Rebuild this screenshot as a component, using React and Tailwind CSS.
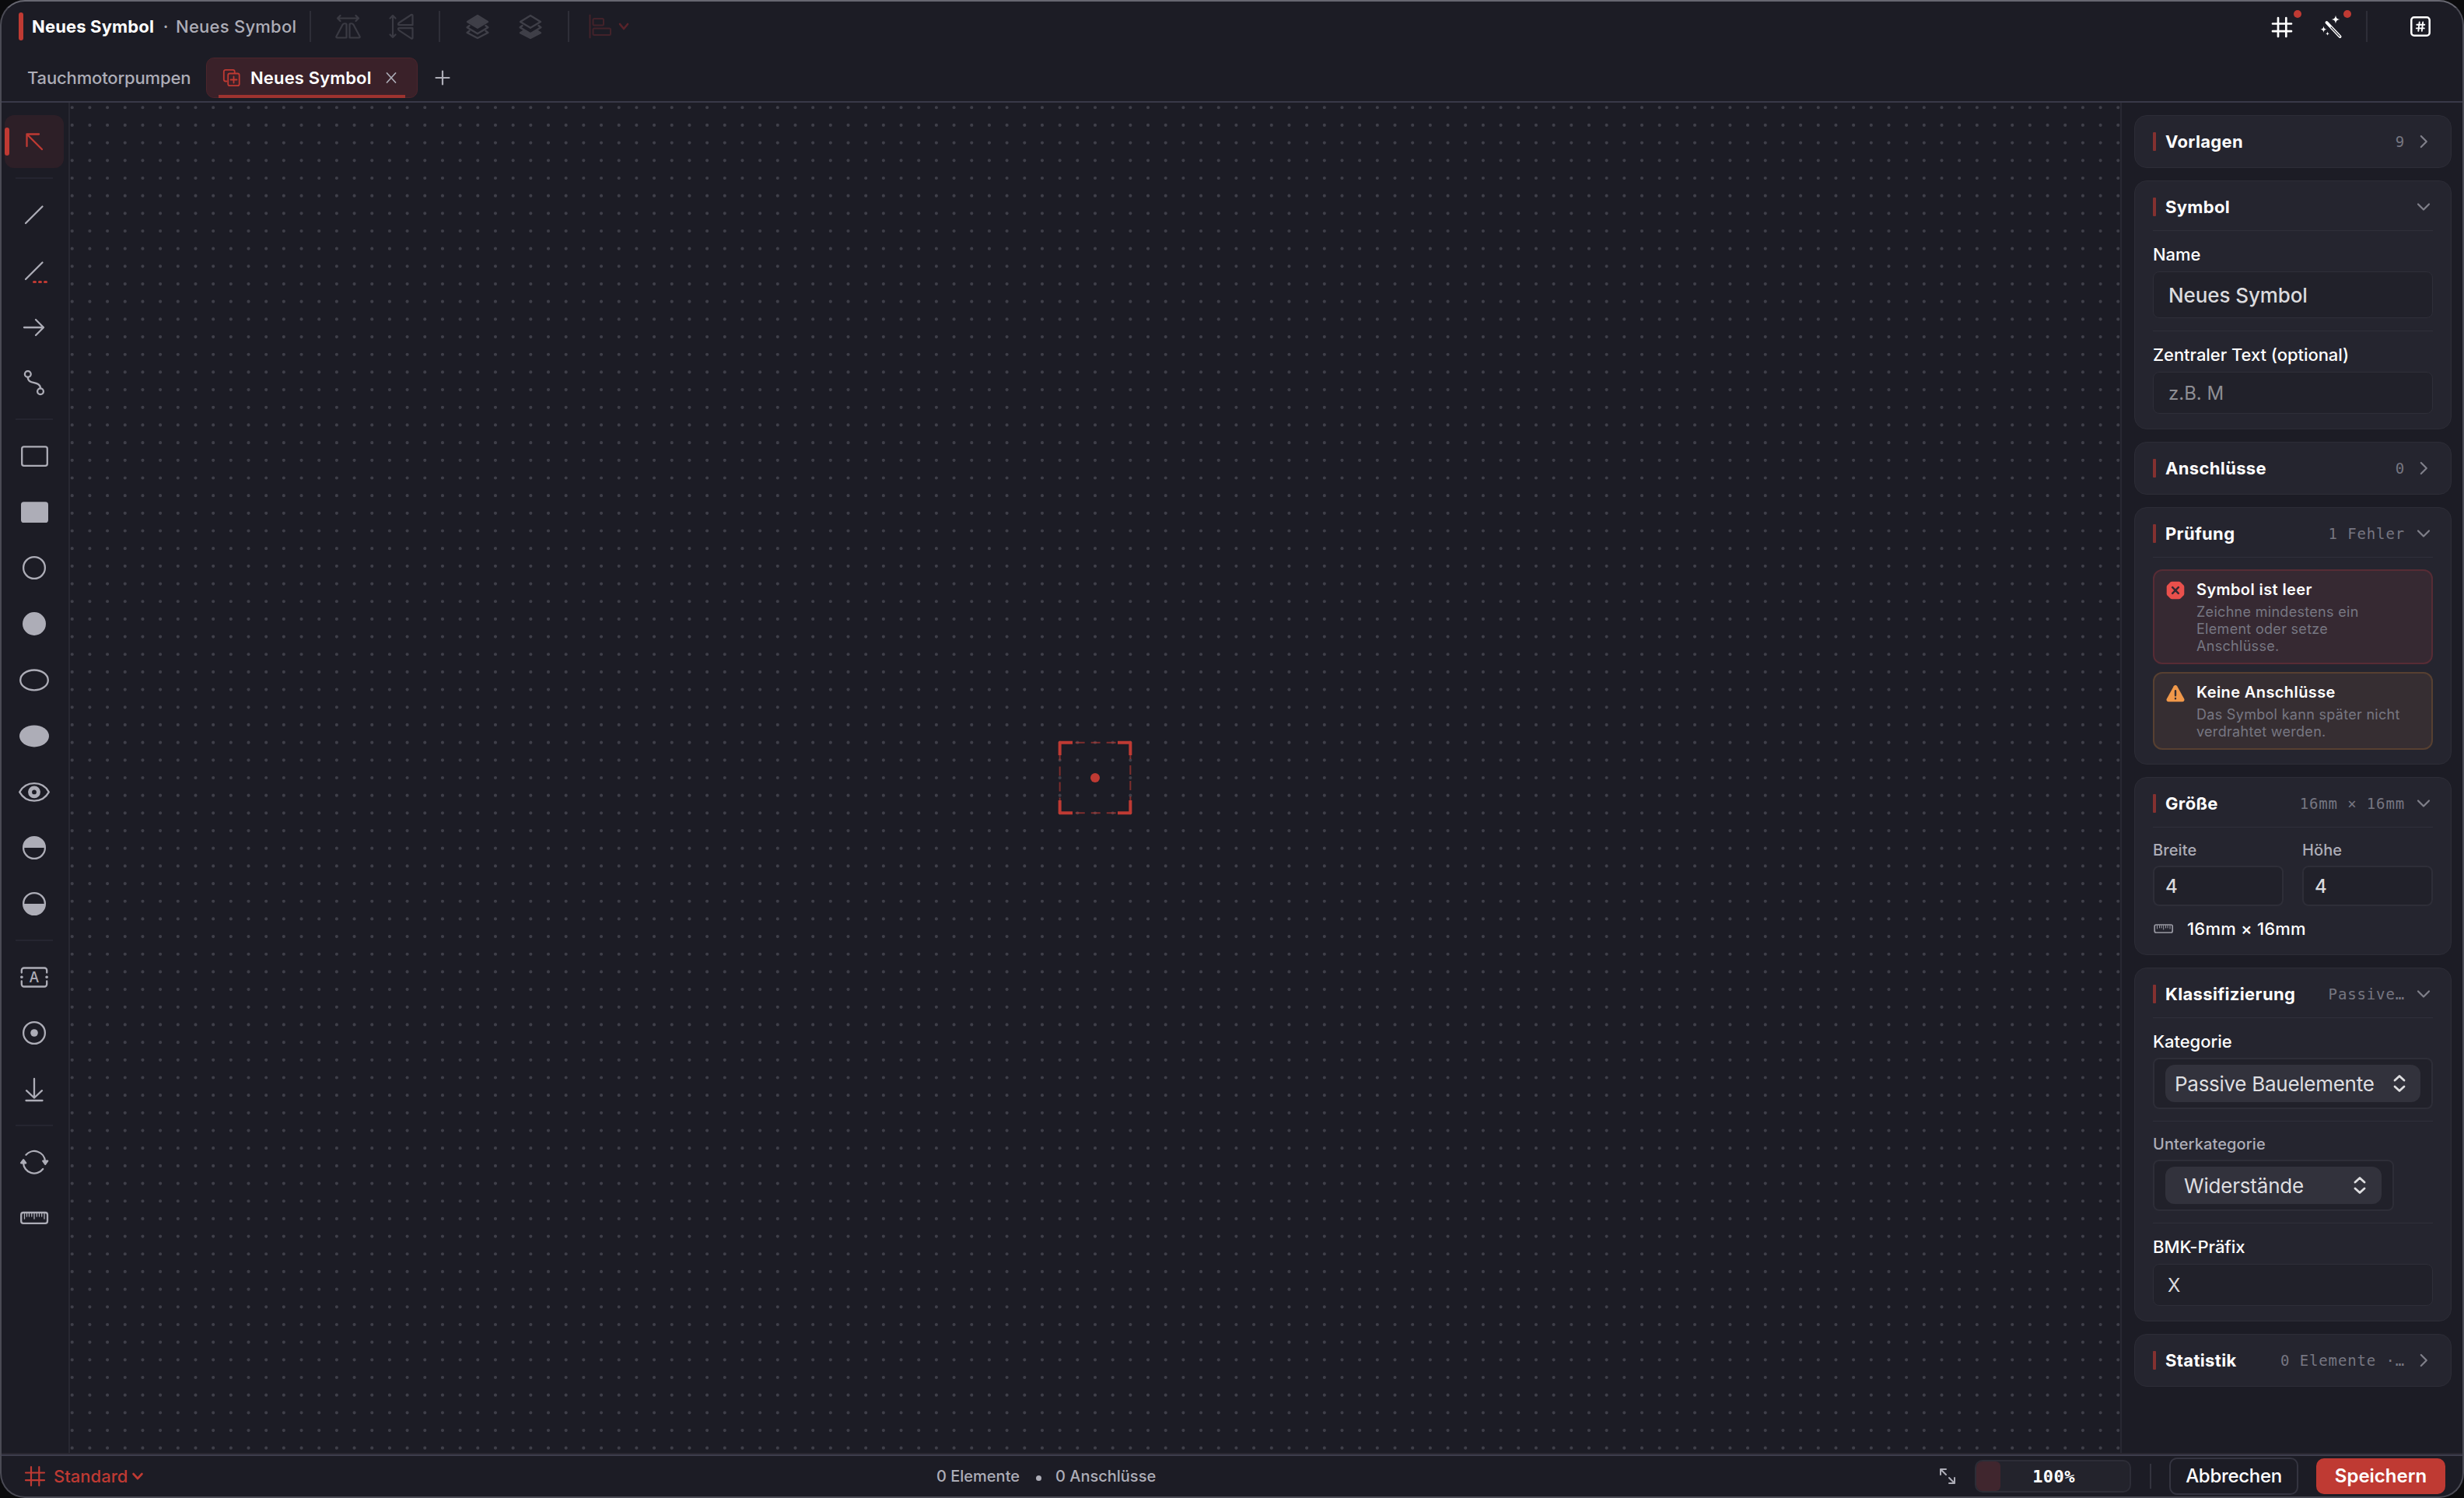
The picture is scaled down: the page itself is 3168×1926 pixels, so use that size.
import React, { useState } from 'react';
import clsx from 'clsx';

const GRID = 22.677;

// dots of the drawing grid, one zero-length stroke per dot
const gridDots = () => {
    let d = '';
    for (let r = 0; r < 77; r++) {
        for (let c = 0; c < 117; c++) {
            const x = 2.73 + c * GRID;
            const y = 6.27 + r * GRID;
            if (x < 2636 && y < 1736) d += `M${x.toFixed(2)} ${y.toFixed(2)}h0`;
        }
    }
    return d;
};
const DOTS = gridDots();

const Ico = ({ w = 40, h = 40, sw = 2.3, className, children }) => (
    <svg width={w} height={h} viewBox={`0 0 ${w} ${h}`} fill="none" stroke="currentColor" strokeWidth={sw} strokeLinecap="round" strokeLinejoin="round" className={clsx('shrink-0', className)}>
        {children}
    </svg>
);

const Solid = (props) => <path fill="currentColor" stroke="none" {...props} />;

const HashIcon = ({ sw = 2.7 }) => <Ico w={28} h={28} sw={sw}><path d="M2 9.5h24M2 19.2h24M9 2v24M19.3 2v24" /></Ico>;
const ChevronDown = ({ className }) => <Ico w={24} h={24} sw={2.2} className={className}><path d="M5 8.5l7 7 7-7" /></Ico>;
const ChevronRight = ({ className }) => <Ico w={24} h={24} sw={2.2} className={className}><path d="M8.8 5l7 7-7 7" /></Ico>;
const UpDown = () => <Ico w={16} h={24} sw={2.8}><path d="M2 8l6-5.5L14 8M2 16l6 5.5 6-5.5" /></Ico>;

const tools = [
    { id: 'select', icon: <path d="M10.5 26V10.5H26M10.5 10.5L30 30" /> },
    null,
    { id: 'line', icon: <path d="M9 31L30.5 9.5" /> },
    { id: 'dashed', icon: <><path d="M9 31L30.5 9.5" /><path d="M19.5 34.6h2M26.5 34.6h2M33.5 34.6h2" stroke="#bf3a33" strokeWidth="3" /></> },
    { id: 'arrow', icon: <path d="M7 21h25M22 11l10 10-10 10" /> },
    { id: 'curve', icon: <><circle cx="11.8" cy="9" r="3.9" /><circle cx="28" cy="31.3" r="3.9" /><path d="M11.8 13c0 10.5 16.2 4 16.2 14.3" /></> },
    null,
    { id: 'rect', icon: <rect x="4.2" y="8.4" width="32.6" height="24.4" rx="2.6" /> },
    { id: 'rect-fill', icon: <rect x="3" y="7.2" width="35" height="26.8" rx="3.6" fill="currentColor" stroke="none" /> },
    { id: 'circle', icon: <circle cx="20" cy="20" r="13.9" /> },
    { id: 'circle-fill', icon: <circle cx="20" cy="20" r="15" fill="currentColor" stroke="none" /> },
    { id: 'ellipse', icon: <ellipse cx="20" cy="20.4" rx="17.8" ry="12.9" /> },
    { id: 'ellipse-fill', icon: <ellipse cx="20" cy="20.4" rx="19" ry="14" fill="currentColor" stroke="none" /> },
    { id: 'eye', icon: <><path d="M1.2 20.4C5 13.5 12 9.2 20 9.2s15 4.3 18.8 11.2C35 27.3 28 31.6 20 31.6S5 27.3 1.2 20.4z" /><circle cx="20" cy="20.4" r="5.4" strokeWidth="5" /></> },
    { id: 'half-top', icon: <><circle cx="20" cy="20" r="13.9" /><Solid d="M6 20a14 14 0 0 1 28 0z" /></> },
    { id: 'half-bottom', icon: <><circle cx="20" cy="20" r="13.9" /><Solid d="M6 20a14 14 0 0 0 28 0z" /></> },
    null,
    { id: 'text', icon: <>
        <path d="M3.8 14.5v-3a3 3 0 0 1 3-3h26.4a3 3 0 0 1 3 3v3M3.8 25.5v4a3 3 0 0 0 3 3h26.4a3 3 0 0 0 3-3v-4" />
        <path d="M3.8 20.2h.2M36 20.2h.2" strokeWidth="3.6" />
        <text x="20" y="27" textAnchor="middle" fontSize="18" fontWeight="500" fill="currentColor" stroke="none">A</text>
    </> },
    { id: 'terminal', icon: <><circle cx="20" cy="20" r="13.9" /><circle cx="20" cy="20" r="4.8" fill="currentColor" stroke="none" /></> },
    { id: 'drop', icon: <path d="M20 7v24M10 22.2l10 9.3 10-9.3M9.5 35h21" /> },
    null,
    { id: 'rotate', icon: <>
        <path d="M9.5 10.8A14 14 0 0 1 34 19M31.2 29A14 14 0 0 1 6 21" />
        <Solid d="M31.5 17.4h5.8c1 0 1.4 1 .8 1.8l-3 4.2c-.5.7-1.3.7-1.8 0l-3-4.2c-.5-.8 0-1.8 1.2-1.8zM3.4 22.4h5.8c1 0 1.4-1 .8-1.8l-3-4.2c-.5-.7-1.3-.7-1.8 0l-3 4.2c-.5.8 0 1.8 1.2 1.8z" />
    </> },
    { id: 'ruler', icon: <><rect x="3.2" y="13" width="33.8" height="13.8" rx="2.8" /><path d="M7.5 14v7M20 14v7M33 14v7M10.5 14v4M13.5 14v4M16.8 14v4M23.3 14v4M26.5 14v4M29.7 14v4" strokeWidth="1.3" /></> },
];

const Divider = ({ className }) => <div className={clsx('w-0.5 h-10 bg-[#2e2e38]', className)} />;

const Header = () => (
    <header className="h-[130px] shrink-0 border-b-2 border-[#393948]">
        <div className="h-16 flex items-center pl-[22px] pr-5">
            <div className="w-1.5 h-9 rounded-full bg-[#bf3a33]" />
            <h1 className="w-[159px] ml-[11px] text-[22px] font-bold tracking-[0.15px] text-white whitespace-nowrap">Neues Symbol</h1>
            <span className="w-[26px] text-center text-[22px] font-medium">·</span>
            <span className="w-[156px] text-[22px] font-medium tracking-[0.25px] whitespace-nowrap">Neues Symbol</span>
            <Divider className="ml-4 mr-3.5" />
            <button className="w-17 flex justify-center text-[#3a3a43]">
                <Ico w={34} h={34} sw={2.2}>
                    <path d="M3 6.5h27M6.5 3L3 6.5 6.5 10M26.5 3L30 6.5 26.5 10M14.5 14.5v17h-12c-1 0-1.5-.8-1-1.8l8-15c1-1.8 5-2 5-.2zM18.5 14.5v17h12c1 0 1.5-.8 1-1.8l-8-15c-1-1.8-5-2-5-.2z" />
                </Ico>
            </button>
            <button className="w-17 flex justify-center text-[#3a3a43]">
                <Ico w={34} h={34} sw={2.2}>
                    <path d="M6 3v28M2.5 6.5L6 3l3.5 3.5M2.5 27.5L6 31l3.5-3.5M14 15.2h17.5V3c0-1-.8-1.5-1.8-1L14.5 12c-1.8 1.2-2 3.2-.5 3.2zM14 19.2h17.5v12.2c0 1-.8 1.5-1.8 1L14.5 22.4c-1.8-1.2-2-3.2-.5-3.2z" />
                </Ico>
            </button>
            <Divider className="mx-3.5" />
            <button className="w-17 flex justify-center text-[#3f3f48]">
                <Ico w={32} h={34} sw={2.4}>
                    <path d="M16 3L29 11 16 18.8 3 11z" fill="currentColor" />
                    <path d="M5.5 16L2.6 18.2 16 26.3l13.4-8.1L26.5 16M5.5 22.8L2.6 25 16 32l13.4-7-2.9-2.2" />
                </Ico>
            </button>
            <button className="w-17 flex justify-center text-[#3f3f48]">
                <Ico w={32} h={34} sw={2.4}>
                    <path d="M16 3L29 11 16 18.8 3 11zM5.5 16L2.6 18.2 16 26.3l13.4-8.1L26.5 16" />
                    <path d="M3 25.2l4-2.4 9 5 9-5 4 2.4L16 32z" fill="currentColor" />
                </Ico>
            </button>
            <Divider className="mx-3.5" />
            <button className="flex items-center ml-2.5 gap-1.5 text-[#43222a]">
                <Ico w={32} h={32} sw={2}><path d="M2.5 1.5v29" /><rect x="6.5" y="6" width="13.5" height="8.5" rx="1.5" /><rect x="6.5" y="18.5" width="22.5" height="8.5" rx="1.5" /></Ico>
                <Ico w={16} h={16} sw={2.6} className="text-[#58232a]"><path d="M3 5l5 6 5-6" /></Ico>
            </button>
            <div className="ml-auto flex items-center text-white">
                <button className="relative w-16 h-16 flex items-center justify-center pt-0.5">
                    <HashIcon />
                    <i className="absolute left-[47px] top-[11px] size-2.5 rounded-full bg-[#bf3a33]" />
                </button>
                <button className="relative w-16 h-16 flex items-center justify-center">
                    <Ico w={32} h={32}>
                        <path d="M9.5 11l17 18" strokeWidth="4" />
                        <path d="M15 16.8L26.2 28.7" stroke="#1c1c25" strokeWidth="1.1" />
                        <Solid d="M21 1.5c.7 4 1.5 5 5.5 5.5-4 .7-4.8 1.5-5.5 5.5-.7-4-1.5-4.8-5.5-5.5 4-.5 4.8-1.500 5.500-5.500zM5.500 15.500c.5 3 1.200 3.600 4 4.200-2.800.5-3.500 1.200-4 4.200-.5-3-1.200-3.700-4-4.200 2.800-.6 3.500-1.200 4-4.200zM10.500 22.500c.3 1.800.8 2.400 2.500 2.700-1.700.3-2.200.8-2.500 2.600-.3-1.800-.8-2.300-2.500-2.600 1.700-.3 2.200-.9 2.500-2.700z" />
                    </Ico>
                    <i className="absolute left-[47px] top-[11px] size-2.5 rounded-full bg-[#bf3a33]" />
                </button>
                <Divider className="ml-3" />
                <button className="w-17 h-16 ml-[34px] flex items-center justify-center">
                    <Ico w={28} h={28} sw={2.5}><rect x="2.3" y="2.3" width="23.4" height="23.4" rx="3.5" /><path d="M9.3 11.8h10M8.8 16.4h10M12.7 8.5l-1.4 11.3M17.2 8.5l-1.4 11.3" strokeWidth="1.9" /></Ico>
                </button>
            </div>
        </div>
        <nav className="h-16 pt-1 pl-[33px] flex items-center text-[22px] whitespace-nowrap">
            <button className="w-[230px] text-left font-medium tracking-[-0.15px]">Tauchmotorpumpen</button>
            <div className="relative w-[272px] h-[52px] flex items-center pl-5 rounded-[10px] border border-[#4c252c] bg-[#3a2129]">
                <Ico w={24} h={24} sw={1.8} className="text-[#bf3a33]">
                    <path d="M5.5 16.5H4a2.2 2.2 0 0 1-2.2-2.2V4A2.2 2.2 0 0 1 4 1.8h9.5A2.2 2.2 0 0 1 15.7 4v1.500" /><rect x="7.2" y="6.5" width="14.5" height="15.7" rx="2.2" /><path d="M14.5 10.5v8M10.5 14.5h8" />
                </Ico>
                <span className="ml-3 w-[157px] font-semibold tracking-[0.15px] text-white">Neues Symbol</span>
                <Ico w={16} h={16} sw={1.7} className="ml-4"><path d="M2.500 2l11 12M13.500 2l-11 12" /></Ico>
                <div className="absolute left-[15px] bottom-[-1px] w-60 h-1 bg-[#9d332f]" />
            </div>
            <Ico w={20} h={20} sw={2.2} className="ml-[22px]"><path d="M10 1.5v17M1.500 10h17" /></Ico>
        </nav>
    </header>
);

const Toolbar = ({ tool, setTool }) => (
    <aside className="w-[88px] shrink-0 border-r-2 border-[#282832] pt-4 pl-1 flex flex-col gap-1">
        {tools.map((t, i) => t ? (
            <button key={t.id} onClick={() => setTool(t.id)} className={clsx('relative w-[76px] h-17 rounded-xl flex items-center justify-center', tool === t.id && 'bg-[#2d1f27] text-[#bf3a33]')}>
                {tool === t.id && <i className="absolute left-0 top-4 w-1.5 h-9 rounded-full bg-[#bf3a33]" />}
                <Ico>{t.icon}</Ico>
            </button>
        ) : <div key={i} className="w-12 h-0.5 my-2 ml-3.5 shrink-0 bg-[#252530]" />)}
    </aside>
);

const Canvas = () => (
    <main className="flex-1 overflow-hidden">
        <svg width="2636" height="1736" fill="none">
            <path d={DOTS} stroke="#3f3f49" strokeWidth="4.2" strokeLinecap="round" />
            <rect x="1272.64" y="822.64" width="90.71" height="90.71" stroke="#bf3a33" strokeOpacity="0.6" strokeWidth="2" strokeDasharray="12 8" />
            <path d="M1272.64 839v-16.360h16.360M1347 822.640h16.350V839M1363.350 897v16.350H1347M1289 913.350h-16.360V897" stroke="#bf3a33" strokeWidth="4" strokeLinejoin="round" />
            <circle cx="1318" cy="868" r="6" fill="#bf3a33" />
        </svg>
    </main>
);

const Line = ({ className }) => <div className={clsx('h-px bg-[#2f2f3a]', className)} />;

const Card = ({ title, value, open, children }) => (
    <section className="rounded-2xl border border-[#2d2d37] bg-[#25252f] px-[23px]">
        <div className="h-[66px] flex items-center">
            <div className="w-1 h-6 rounded-[1px] bg-[#843130]" />
            <h2 className="ml-3 text-[22px] font-bold tracking-[0.35px] text-white">{title}</h2>
            <span className="ml-auto mr-3 whitespace-pre font-['DejaVu_Sans_Mono',monospace] text-[19px] tracking-[0.86px] text-[#767681]">{value}</span>
            {open ? <ChevronDown className="text-[#80808a]" /> : <ChevronRight className="text-[#80808a]" />}
        </div>
        {open && <Line className="-mt-[3px]" />}
        {children}
    </section>
);

const Label = ({ children }) => <label className="block mt-3.5 h-8 leading-8 text-[22px] font-medium tracking-[-0.05px] text-white">{children}</label>;
const SmallLabel = ({ children }) => <label className="block mt-[15px] h-7 leading-7 text-[20px] font-medium tracking-[0.1px]">{children}</label>;
const field = 'block w-full rounded-lg border border-[#2e2e38] bg-[#21212a] outline-none';

const Message = ({ icon, title, text, className }) => (
    <div className={clsx('flex rounded-xl border-2 pt-2.5 pb-2.5 pl-[15px]', className)}>
        {icon}
        <div className="ml-[15px] w-[270px]">
            <h3 className="h-7 leading-7 text-[20px] font-semibold tracking-[0.4px] text-white">{title}</h3>
            <p className="mt-1 text-[18px] leading-[22px] tracking-[0.3px] text-[#777782]">{text}</p>
        </div>
    </div>
);

const Inspector = () => (
    <aside className="w-[440px] shrink-0 border-l-2 border-[#282832] pt-4 pl-4 pr-3.5 flex flex-col gap-4">
        <Card title="Vorlagen" value="9" />
        <Card title="Symbol" open>
            <Label>Name</Label>
            <input defaultValue="Neues Symbol" className={clsx(field, 'mt-1.5 h-[60px] pl-[19px] text-[26px] font-medium tracking-[-0.1px] text-[#dbdbde]')} />
            <Line className="mt-4" />
            <Label>Zentraler Text (optional)</Label>
            <input placeholder="z.B. M" className={clsx(field, 'mt-1.5 mb-[19px] h-[54px] pl-[19px] text-[24px] placeholder:text-[#8e8e94]')} />
        </Card>
        <Card title="Anschlüsse" value="0" />
        <Card title="Prüfung" value="1 Fehler" open>
            <Message
                className="mt-[15px] border-[#572c35] bg-[#362932]"
                icon={<Ico w={24} h={24} sw={2.5} className="mt-[3px] text-[#ea504c]"><Solid d="M7.500.7h9a3 3 0 0 1 2 .8l4 4a3 3 0 0 1 .8 2v9a3 3 0 0 1-.8 2l-4 4a3 3 0 0 1-2 .8h-9a3 3 0 0 1-2-.8l-4-4a3 3 0 0 1-.8-2v-9a3 3 0 0 1 .8-2l4-4a3 3 0 0 1 2-.8z" /><path d="M8.200 8.200l7.600 7.600M15.800 8.200l-7.600 7.600" stroke="#362932" /></Ico>}
                title="Symbol ist leer"
                text="Zeichne mindestens ein Element oder setze Anschlüsse."
            />
            <Message
                className="mt-2.5 mb-[18px] border-[#574031] bg-[#362e32]"
                icon={<Ico w={24} h={24} sw={2.4} className="mt-1 text-[#f0984a]"><Solid d="M9.800 2.300c1-1.700 3.400-1.700 4.400 0l9 16.300c.9 1.700-.3 3.700-2.200 3.700H3c-1.900 0-3.100-2-2.200-3.700z" /><path d="M12 8.300v6M12 18v.2" stroke="#362e32" /></Ico>}
                title="Keine Anschlüsse"
                text="Das Symbol kann später nicht verdrahtet werden."
            />
        </Card>
        <Card title="Größe" value="16mm × 16mm" open>
            <div className="grid grid-cols-2 gap-x-6">
                {['Breite', 'Höhe'].map((l) => (
                    <div key={l}>
                        <SmallLabel>{l}</SmallLabel>
                        <input defaultValue="4" className={clsx(field, 'mt-1.5 h-[52px] border-2 pl-3.5 text-[24px] font-medium text-[#dbdbde]')} />
                    </div>
                ))}
            </div>
            <div className="mt-[15px] mb-[19px] h-7 flex items-center">
                <Ico w={26} h={14} sw={1.7} className="ml-px text-[#9a9aa4]"><rect x="1.2" y="2" width="23" height="10" rx="2" /><path d="M4.500 3v4M7.500 3v3M10 3v3M12.700 3v5M15.500 3v3M18 3v3M21 3v4" strokeWidth="1" /></Ico>
                <span className="ml-[17px] text-[22px] font-medium tracking-[0.2px] text-white">16mm × 16mm</span>
            </div>
        </Card>
        <Card title="Klassifizierung" value="Passive…" open>
            <Label>Kategorie</Label>
            <div className={clsx(field, 'mt-[5px] h-[66px] border-2 px-3.5 pt-[7px]')}>
                <button className="w-full h-12 rounded-xl bg-[#32323c] flex items-center justify-between pl-3 pr-[19px] text-[26px] tracking-[-0.28px] text-[#dedee0]">Passive Bauelemente <UpDown /></button>
            </div>
            <Line className="mt-[15px]" />
            <SmallLabel>Unterkategorie</SmallLabel>
            <div className={clsx(field, 'mt-1.5 h-[66px] border-2 px-3.5 pt-[7px] max-w-[310px]')}>
                <button className="w-full h-12 rounded-xl bg-[#32323c] flex items-center justify-between pl-6 pr-5 text-[26px] tracking-[-0.2px] text-[#dedee0]">Widerstände <UpDown /></button>
            </div>
            <Line className="mt-[15px]" />
            <Label>BMK-Präfix</Label>
            <input defaultValue="X" className={clsx(field, 'mt-1.5 mb-[19px] h-[54px] pl-[18px] text-[24px] text-[#dbdbde]')} />
        </Card>
        <Card title="Statistik" value="0 Elemente ·…" />
    </aside>
);

const Footer = () => (
    <footer className="h-14 shrink-0 border-t-2 border-[#292730] whitespace-nowrap">
        <div className="h-full border-t-2 border-[#3d3d4c] flex items-center pr-[22px]">
            <button className="w-[1202px] shrink-0 pl-[29px] flex items-center text-[22px] font-medium text-[#bf3a33]">
                <HashIcon sw={2.2} />
                <span className="ml-2.5 w-[99px] text-left">Standard</span>
                <Ico w={18} h={16} sw={2.6}><path d="M3.500 5l5.500 6 5.500-6" /></Ico>
            </button>
            <span className="w-[118px] text-[20px] font-medium">0 Elemente</span>
            <i className="mt-1 ml-2.5 mr-[18px] size-[7px] rounded-full bg-current" />
            <span className="text-[20px] font-medium">0 Anschlüsse</span>
            <div className="ml-auto flex items-center">
                <Ico w={22} h={22} sw={2}><path d="M2 9V2h7M2 2l7 7M20 13v7h-7M20 20l-7-7" /></Ico>
                <div className="relative ml-6 w-[201px] h-[42px] rounded-[10px] border-2 border-[#2d2d37] bg-[#23232c] overflow-hidden">
                    <div className="w-[31px] h-full rounded-r-md bg-[#40262e]" />
                    <span className="absolute inset-0 pl-0.5 flex items-center justify-center text-[22px] font-bold tracking-[0.4px] text-white font-['DejaVu_Sans_Mono',monospace]">100%</span>
                </div>
                <div className="ml-6 w-0.5 h-8 bg-[#33333e]" />
                <button className="ml-[23px] w-[166px] h-12 rounded-[10px] border-2 border-[#343440] text-[24px] font-medium tracking-[-0.3px] text-white">Abbrechen</button>
                <button className="ml-[23px] w-[166px] h-[46px] rounded-[10px] bg-[#bf3a33] text-[24px] font-semibold text-white">Speichern</button>
            </div>
        </div>
    </footer>
);

export default function App() {
    const [tool, setTool] = useState('select');

    return (
        <div className="w-[3168px] h-[1926px] bg-[#0b0b0d] overflow-hidden">
            <div className="w-full h-full flex flex-col overflow-hidden rounded-[32px] border-2 border-[#4a4a54] border-t-[#676771] bg-[#1c1c25] font-['Inter',sans-serif] text-[#adadb7]">
                <Header />
                <div className="flex-1 min-h-0 flex">
                    <Toolbar tool={tool} setTool={setTool} />
                    <Canvas />
                    <Inspector />
                </div>
                <Footer />
            </div>
        </div>
    );
}
